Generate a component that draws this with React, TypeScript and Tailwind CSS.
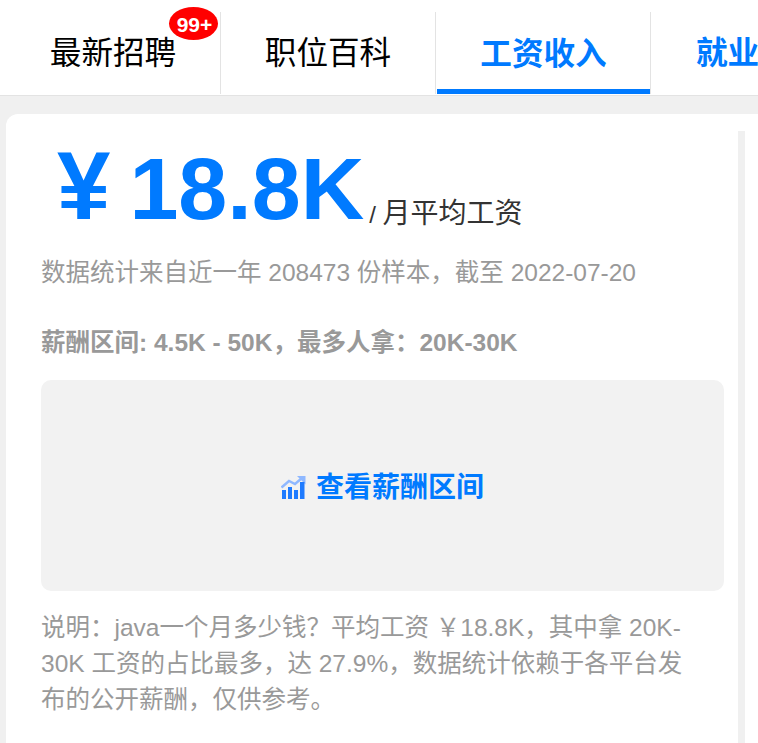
const FONT = "font-['Liberation_Sans','Noto_Sans_CJK_SC',sans-serif]"

function TrendIcon() {
  return (
    <svg width="25" height="23" viewBox="0 0 25 23" className="shrink-0">
      <path d="M0.5 11.5 L8 5 L14 8 L21 2" fill="none" stroke="#8fb8ff" strokeWidth="2.4" />
      <path d="M16 0 H24.5 V8.5 Z" fill="#8fb8ff" />
      <rect x="1" y="14" width="4" height="9" fill="#1f7bff" />
      <rect x="7" y="11" width="4" height="12" fill="#1f7bff" />
      <rect x="13" y="14" width="4" height="9" fill="#1f7bff" />
      <rect x="19" y="6" width="4.5" height="17" fill="#1f7bff" />
    </svg>
  )
}

export default function App() {
  return (
    <div className={`${FONT} h-[743px] w-[758px] overflow-hidden bg-[#f0f0f0]`}>
      {/* Tabs */}
      <div className="h-[96px] overflow-hidden border-b border-[#e3e3e3] bg-white pt-[12px]">
        <div className="flex h-[82px] text-[31.6px]">
          <div className="relative flex w-[221px] shrink-0 items-center justify-center border-r border-[#e3e3e3] pl-[6px] pt-[2px] text-black">
            最新招聘
            <span className="absolute left-[169px] top-[-5px] flex h-[33px] w-[49px] items-center justify-center rounded-[50%] bg-[#ff0000] pl-[2px] pt-[3px] text-[21px] font-bold text-white">
              99+
            </span>
          </div>
          <div className="flex w-[215px] shrink-0 items-center justify-center border-r border-[#e3e3e3] pt-[2px] text-black">
            职位百科
          </div>
          <div className="flex w-[215px] shrink-0 flex-col items-center justify-end border-r border-[#e3e3e3] pl-[1px] font-bold text-[#007aff]">
            <span className="mb-[11px]">工资收入</span>
            <span className="h-[5px] w-full bg-[#007aff]" />
          </div>
          <div className="flex shrink-0 items-center whitespace-nowrap pl-[45px] pt-[2px] font-bold text-[#007aff]">
            就业前景
          </div>
        </div>
      </div>

      {/* Card */}
      <div className="ml-[6px] mt-[18px] h-[640px] rounded-tl-[12px] bg-white pl-[35px] pt-[17px]">
        <div className="flex">
          <div className="w-[697px]">
            <div className="flex h-[108px] items-baseline whitespace-nowrap pl-[16px] pt-[5px] font-bold leading-[100px] text-[#007aff]">
              <span className="mr-[19px] text-[96px]">¥</span>
              <span className="text-[88px]">18.8K</span>
              <span className="ml-[5px] translate-y-[4px] text-[28px] font-normal text-[#333333]">
                <span className="text-[24px]">/ </span>月平均工资
              </span>
            </div>
            <p className="mt-[16px] whitespace-nowrap text-[24.5px] leading-[36px] text-[#999999]">
              数据统计来自近一年 208473 份样本，截至 2022-07-20
            </p>
            <p className="mt-[34px] whitespace-nowrap text-[24.5px] font-bold leading-[36px] text-[#999999]">
              薪酬区间: 4.5K - 50K，最多人拿：20K-30K
            </p>
            <div className="mt-[19px] flex h-[211px] w-[683px] items-center justify-center gap-[10px] rounded-[10px] bg-[#f2f2f2] pt-[3px]">
              <TrendIcon />
              <span className="pt-[2px] text-[28px] font-bold text-[#007aff]">查看薪酬区间</span>
            </div>
            <p className="mt-[19px] w-[665px] text-[24.5px] leading-[36px] text-[#999999]">
              说明：java一个月多少钱？平均工资 ￥18.8K，其中拿 20K-30K 工资的占比最多，达 27.9%，数据统计依赖于各平台发布的公开薪酬，仅供参考。
            </p>
          </div>
          <div className="h-[620px] w-[7px] bg-[#f0f0f0]" />
        </div>
      </div>
    </div>
  )
}
